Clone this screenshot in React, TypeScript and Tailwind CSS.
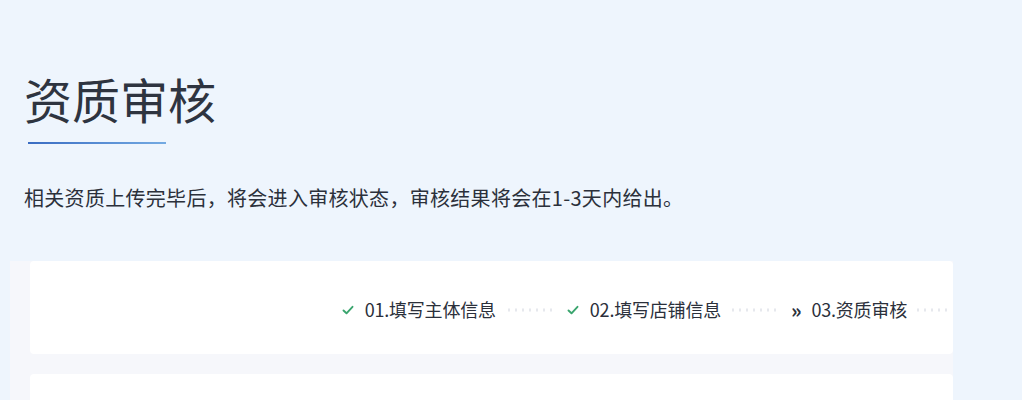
import React from "react";

const font = { fontFamily: '"Noto Sans CJK SC", "Noto Sans", sans-serif' };

function Check() {
  return (
    <svg width="12" height="12" viewBox="0 0 12 12" className="shrink-0">
      <path d="M1.5 6.5 L4.5 9.3 L10.5 2.8" fill="none" stroke="#3aa56e" strokeWidth="1.9" strokeLinecap="round" strokeLinejoin="round" />
    </svg>
  );
}

function Dots({ n }: { n: number }) {
  return (
    <svg width={n * 7} height="4" viewBox={`0 0 ${n * 7} 4`} className="block">
      {Array.from({ length: n }).map((_, i) => (
        <rect key={i} x={i * 7 + 2} y={0.5} width={2} height={3} fill="#e6e8ed" />
      ))}
    </svg>
  );
}

export default function App() {
  return (
    <div className="w-[1022px] h-[400px] overflow-hidden bg-[#eef5fd] text-[#2b303b]" style={font}>
      <div className="pl-[24px] pt-[74px]">
        <h1 className="text-[48px] leading-[48px] font-normal text-[#2e3440]">资质审核</h1>
        <div className="ml-[4px] mt-[20px] w-[138px] h-[2px] bg-gradient-to-r from-[#3a6cc2] to-[#74aae2]" />
        <p className="mt-[43px] text-[20px] leading-[22px] text-[#2b303b] tracking-[0.3px]">
          相关资质上传完毕后，将会进入审核状态，审核结果将会在1-3天内给出。
        </p>
      </div>
      <div className="ml-[10px] mt-[52px] w-[943px] h-[200px] bg-[#f6f7fb] pl-[20px]">
        <div className="h-[93px] bg-white rounded-[4px] flex items-center justify-end pr-[3px] pt-[4px] text-[18px] tracking-[-0.2px] text-[#2b303b]">
          <div className="flex items-center">
            <Check />
            <span className="ml-[11px]">01.填写主体信息</span>
            <div className="ml-[10px]"><Dots n={7} /></div>
            <div className="ml-[12px]"><Check /></div>
            <span className="ml-[11px]">02.填写店铺信息</span>
            <div className="ml-[9px]"><Dots n={7} /></div>
            <span className="ml-[12px] font-bold text-[20px] leading-none">»</span>
            <span className="ml-[10px]">03.资质审核</span>
            <div className="ml-[8px]"><Dots n={5} /></div>
          </div>
        </div>
        <div className="mt-[20px] h-[93px] bg-white rounded-[4px]" />
      </div>
    </div>
  );
}
